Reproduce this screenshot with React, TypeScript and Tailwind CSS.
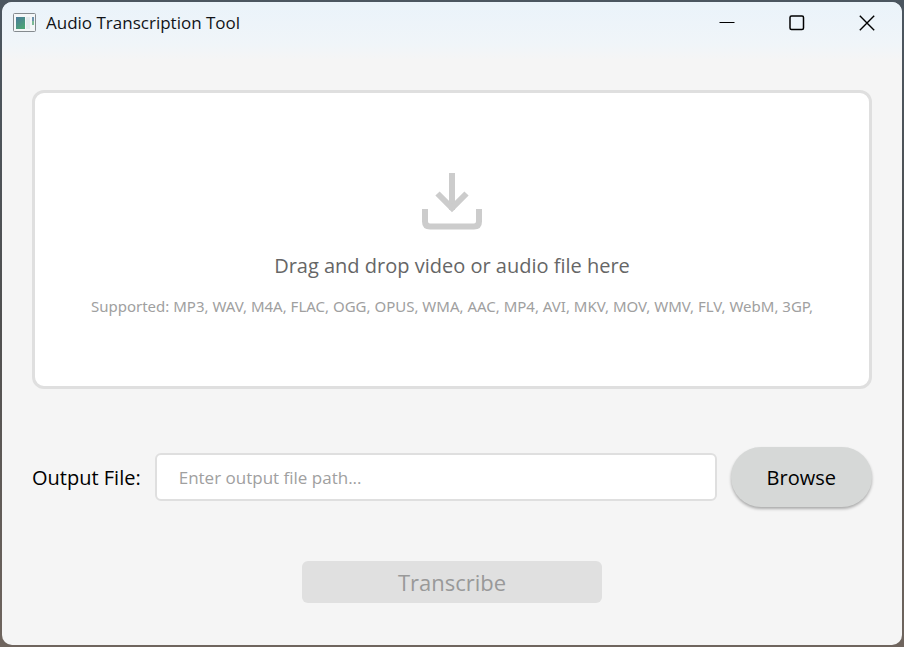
import { useState } from 'react'

const FORMATS = [
  'MP3', 'WAV', 'M4A', 'FLAC', 'OGG', 'OPUS', 'WMA', 'AAC', 'MP4',
  'AVI', 'MKV', 'MOV', 'WMV', 'FLV', 'WebM', '3GP',
]

function AppIcon() {
  return (
    <svg width="24" height="20" viewBox="0 0 24 20" aria-hidden="true">
      <defs>
        <linearGradient id="pane" x1="0" y1="0" x2="0.6" y2="1">
          <stop offset="0" stopColor="#4a7a9c" />
          <stop offset="1" stopColor="#4ba374" />
        </linearGradient>
      </defs>
      <rect x="1.5" y="0.5" width="22" height="18" rx="1" fill="#f4f7f8" stroke="#858b8f" />
      <rect x="4" y="4" width="9" height="12" fill="url(#pane)" />
      <rect x="14" y="4" width="4" height="12" fill="#e3ebed" />
      <rect x="20" y="4" width="2" height="4" fill="#6f93ad" />
      <rect x="20" y="8" width="2" height="4" fill="#7dbb96" />
    </svg>
  )
}

function TitleBar() {
  return (
    <header className="flex h-[42px] items-center bg-linear-to-b from-[#eaf3fa] to-[#f0f5f9] pl-[10px]">
      <AppIcon />
      <h1 className="ml-[10px] grow text-[17px] text-[#111418]">Audio Transcription Tool</h1>
      <div className="flex h-full text-black">
        <button type="button" aria-label="Minimize" className="flex w-[70px] items-center justify-center">
          <svg width="16" height="16" viewBox="0 0 16 16" fill="none" stroke="currentColor" strokeWidth="1.2">
            <path d="M0.5 7.5H15.5" />
          </svg>
        </button>
        <button type="button" aria-label="Maximize" className="flex w-[70px] items-center justify-center">
          <svg width="16" height="16" viewBox="0 0 16 16" fill="none" stroke="currentColor" strokeWidth="1.5">
            <rect x="1" y="1" width="13.5" height="13.5" rx="1.5" />
          </svg>
        </button>
        <button type="button" aria-label="Close" className="flex w-[70px] items-center justify-center">
          <svg width="16" height="16" viewBox="0 0 16 16" fill="none" stroke="currentColor" strokeWidth="1.4">
            <path d="M0.8 0.8L15.2 15.2M15.2 0.8L0.8 15.2" />
          </svg>
        </button>
      </div>
    </header>
  )
}

function DropZone() {
  return (
    <section className="flex grow flex-col items-center justify-center rounded-[12px] border-[3px] border-[#dfdfdf] bg-white px-4 pt-2">
      <svg width="64" height="60" viewBox="0 0 64 60" fill="none" stroke="#cccccc" aria-hidden="true">
        <path d="M32 1V38" strokeWidth="6" />
        <path d="M17.5 21.5L32 36L46.5 21.5" strokeWidth="6" />
        <path d="M5 37V49.5Q5 54.5 10 54.5H54Q59 54.5 59 49.5V37" strokeWidth="6" />
      </svg>
      <p className="mt-5 text-center text-[20px] leading-7 text-[#666666]">
        Drag and drop video or audio file here
      </p>
      <p className="mt-4 text-center font-['Noto_Sans',sans-serif] text-[15px] leading-5 text-[#a0a0a0]">
        Supported: {FORMATS.join(', ')},
      </p>
    </section>
  )
}

export default function App() {
  const [outputPath, setOutputPath] = useState('')

  return (
    <div className="flex min-h-screen bg-linear-to-b from-[#4b5660] via-[#505050] to-[#6f655e] p-[2px] font-['Open_Sans','Noto_Sans',sans-serif]">
      <div className="flex grow flex-col overflow-hidden rounded-[10px] bg-[#f5f5f5]">
        <TitleBar />
        <div className="h-4 bg-linear-to-b from-[#f0f5f9] to-[#f5f5f5]" />
        <main className="flex grow flex-col px-[30px] pt-[30px] pb-[42px]">
          <DropZone />
          <div className="mt-[58px] flex items-center gap-[14px]">
            <label htmlFor="output" className="pt-0.5 text-[20px] text-black">Output File:</label>
            <input
              id="output"
              type="text"
              value={outputPath}
              onChange={(e) => setOutputPath(e.target.value)}
              placeholder="Enter output file path..."
              className="h-12 min-w-0 grow rounded-[6px] border-2 border-[#dfdfdf] bg-white px-[22px] text-[17px] text-black outline-none placeholder:text-[#a0a0a0]"
            />
            <button
              type="button"
              className="h-[60px] rounded-full bg-[#d6d8d7] px-9 pt-0.5 text-[20px] text-black shadow-[0_2px_3px_rgba(0,0,0,0.3)]"
            >
              Browse
            </button>
          </div>
          <button
            type="button"
            disabled={!outputPath}
            className="mx-auto mt-[54px] h-[42px] w-[300px] rounded-[6px] bg-[#e0e0e0] text-[22px] text-[#999999]"
          >
            Transcribe
          </button>
        </main>
      </div>
    </div>
  )
}
